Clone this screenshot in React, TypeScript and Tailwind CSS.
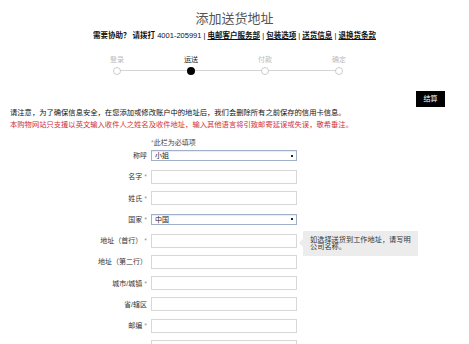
import React from 'react'

const steps = [
    { label: '登录', active: false },
    { label: '运送', active: true },
    { label: '付款', active: false },
    { label: '确定', active: false },
]

type Field = { label: string; required?: boolean; kind: 'input' | 'select'; value?: string; tip?: boolean }

const fields: Field[] = [
    { label: '称呼', kind: 'select', value: '小姐' },
    { label: '名字', required: true, kind: 'input' },
    { label: '姓氏', required: true, kind: 'input' },
    { label: '国家', required: true, kind: 'select', value: '中国' },
    { label: '地址（首行）', required: true, kind: 'input', tip: true },
    { label: '地址（第二行）', kind: 'input' },
    { label: '城市/城镇', required: true, kind: 'input' },
    { label: '省/辖区', kind: 'input' },
    { label: '邮编', required: true, kind: 'input' },
    { label: '', kind: 'input' },
]

function FakeSelect({ value }: { value?: string }) {
    return (
        <div className="w-[146px] h-[11px] border border-[#9fb0c8] bg-white flex items-center justify-between pl-[3px] pr-[3px] shadow-[inset_0_1px_1px_rgba(0,0,0,0.08)]">
            <span className="text-[7px] leading-[9px] text-[#222]">{value}</span>
            <span className="w-[2px] h-[2px] bg-[#222]"></span>
        </div>
    )
}

export default function App() {
    return (
        <div className="w-[469px] h-[344px] overflow-hidden bg-white font-['Liberation_Sans','Noto_Sans_CJK_SC',sans-serif] text-[#333]">
            <h1 className="pt-[11px] text-center text-[13px] leading-[16px] text-[#555]">添加送货地址</h1>

            <div className="mt-[4px] text-center text-[7.5px] leading-[10px] font-bold text-[#111]">
                需要协助？ 请拨打 <span className="font-normal">4001-205991 |</span>{' '}
                <span className="underline">电邮客户服务部</span> <span className="font-normal">|</span>{' '}
                <span className="underline">包装选项</span> <span className="font-normal">|</span>{' '}
                <span className="underline">送货信息</span> <span className="font-normal">|</span>{' '}
                <span className="underline">退换货条款</span>
            </div>

            {/* progress steps */}
            <div className="relative ml-[80px] w-[296px] mt-[14px] flex">
                <div className="absolute left-[37px] right-[37px] top-[15px] h-px bg-[#d4d4d4]"></div>
                {steps.map((s) => (
                    <div key={s.label} className="flex-1 flex flex-col items-center">
                        <span className={`text-[7px] leading-[9px] ${s.active ? 'text-[#222]' : 'text-[#bbb]'}`}>{s.label}</span>
                        <span
                            className={`relative z-10 mt-[3px] w-[8px] h-[8px] rounded-full ${s.active ? 'bg-black' : 'bg-white border border-[#ccc]'}`}
                        ></span>
                    </div>
                ))}
            </div>

            <div className="flex justify-end pr-[24px] mt-[16px]">
                <button className="w-[29px] h-[16px] bg-black text-white text-[7px] leading-[16px]">结算</button>
            </div>

            <div className="pl-[10px] text-[7.3px] leading-[12px]">
                <p className="text-[#111]">请注意，为了确保信息安全，在您添加或修改账户中的地址后，我们会删除所有之前保存的信用卡信息。</p>
                <p className="text-[#d0303a]">本购物网站只支援以英文输入收件人之姓名及收件地址，输入其他语言将引致邮寄延误或失误，敬希垂注。</p>
            </div>

            <div className="ml-[151px] mt-[8px] text-[7px] leading-[7px] text-[#444]">
                <span className="text-[#999]">*</span>此栏为必填项
            </div>

            <div className="flex flex-col mt-[-1px]">
                {fields.map((f, i) => (
                    <div key={i} className="h-[21.25px] flex items-center">
                        <div className="w-[147px] text-right text-[7px] leading-[9px] text-[#333]">
                            {f.label}
                            {f.required && <span className="text-[#999] ml-[2px]">*</span>}
                        </div>
                        <div className="ml-[4px]">
                            {f.kind === 'select' ? (
                                <FakeSelect value={f.value} />
                            ) : (
                                <div className="w-[146px] h-[14px] border border-[#d8d8d8] bg-white"></div>
                            )}
                        </div>
                        {f.tip && (
                            <div className="relative ml-[6px] mt-[5px] w-[115px] h-[25px] bg-[#ececec] pl-[7px] pt-[5px] text-[7.2px] leading-[7.5px] text-[#333]">
                                <span className="absolute left-[-4px] top-[8px] w-0 h-0 border-y-[4px] border-y-transparent border-r-[4px] border-r-[#ececec]"></span>
                                如选择送货到工作地址，请写明
                                <br />
                                公司名称。
                            </div>
                        )}
                    </div>
                ))}
            </div>
        </div>
    )
}
